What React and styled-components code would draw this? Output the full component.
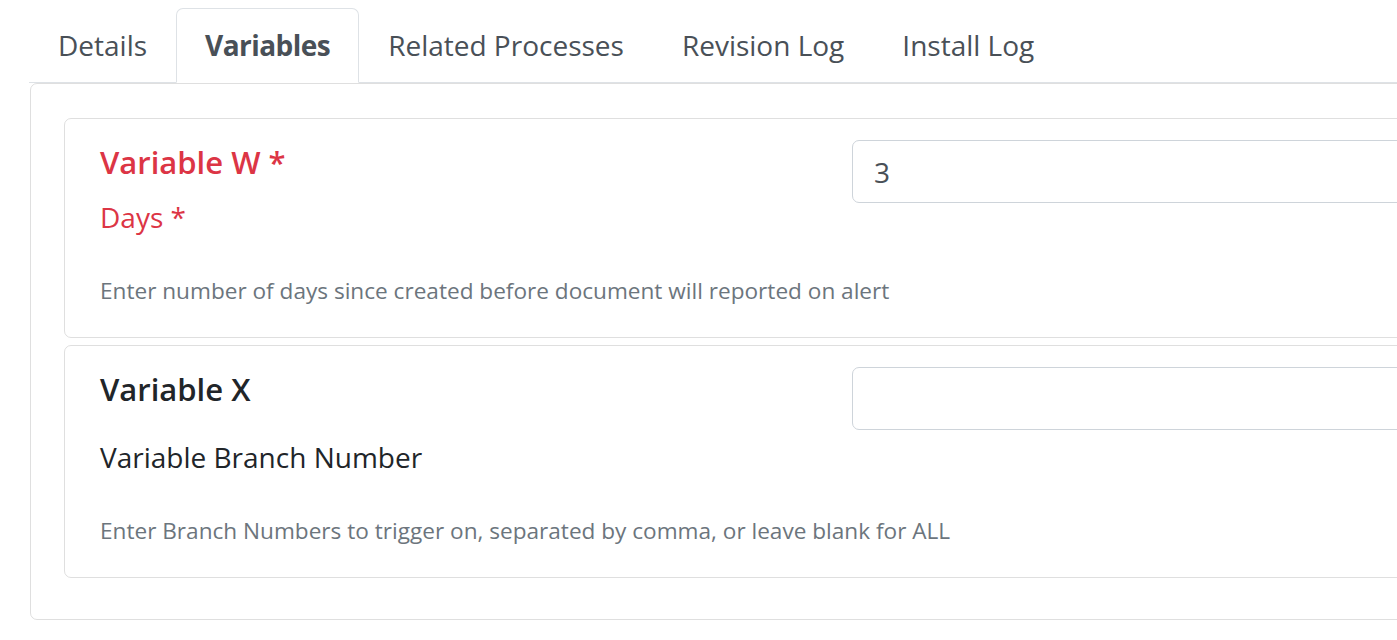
import React from 'react';
import styled, { createGlobalStyle } from 'styled-components';

const Global = createGlobalStyle`
  html, body { margin: 0; padding: 0; background: #fff; overflow: hidden; }
  body { font-family: "Open Sans", "Noto Sans", sans-serif; color: #212529; }
  * { box-sizing: border-box; }
`;

const Page = styled.div`
  width: 1700px;
  padding: 8px 0 0 30px;
`;

const Nav = styled.ul`
  display: flex;
  list-style: none;
  margin: 0 0 0 -1px;
  padding: 0;
  border-bottom: 1px solid #dee2e6;
`;

const Tab = styled.li`
  margin-bottom: -1px;
  padding: 14px 28px;
  font-size: 28px;
  line-height: 45px;
  color: #495057;
  font-weight: ${p => (p.$active ? 700 : 400)};
  letter-spacing: ${p => (p.$active ? '-0.55px' : '0')};
  background: ${p => (p.$active ? '#fff' : 'transparent')};
  border: 1px solid transparent;
  border-color: ${p => (p.$active ? '#dee2e6 #dee2e6 #fff' : 'transparent')};
  border-top-left-radius: 7px;
  border-top-right-radius: 7px;
  white-space: nowrap;
`;

const Card = styled.div`
  border: 1px solid rgba(0, 0, 0, 0.125);
  border-radius: 7px;
  padding: 34px 34px 34px 33px;
`;

const Item = styled.div`
  display: grid;
  grid-template-columns: 752px 1fr;
  align-items: start;
  border: 1px solid rgba(0, 0, 0, 0.125);
  border-radius: 7px;
  padding: 21px 0 30px 35px;
  margin-bottom: 7px;
`;

const Info = styled.div`
  display: flex;
  flex-direction: column;
`;

const Title = styled.h5`
  margin: 0;
  font-size: 31px;
  line-height: 42px;
  font-weight: 600;
  padding-top: 1px;
  margin-bottom: -1px;
  color: ${p => (p.$required ? '#dc3545' : '#212529')};
`;

const Label = styled.label`
  display: block;
  margin-top: ${p => p.$gap}px;
  font-size: 28px;
  line-height: 42px;
  color: ${p => (p.$required ? '#dc3545' : '#212529')};
`;

const Help = styled.small`
  display: block;
  margin-top: 36px;
  font-size: 22.6px;
  line-height: 33px;
  color: #6c757d;
  white-space: nowrap;
`;

const Input = styled.input`
  display: block;
  width: 100%;
  height: 63px;
  padding: 0 21px;
  font-family: inherit;
  font-size: 28px;
  color: #495057;
  background: #fff;
  border: 1px solid #ced4da;
  border-radius: 7px;
  outline: none;
`;

const tabs = ['Details', 'Variables', 'Related Processes', 'Revision Log', 'Install Log'];

const variables = [
  {
    name: 'Variable W',
    label: 'Days',
    required: true,
    gap: 14,
    value: '3',
    help: 'Enter number of days since created before document will reported on alert',
  },
  {
    name: 'Variable X',
    label: 'Variable Branch Number',
    required: false,
    gap: 27,
    value: '',
    help: 'Enter Branch Numbers to trigger on, separated by comma, or leave blank for ALL',
  },
];

export default function App() {
  return (
    <>
      <Global />
      <Page>
        <Nav>
          {tabs.map(t => (
            <Tab key={t} $active={t === 'Variables'}>{t}</Tab>
          ))}
        </Nav>
        <Card>
          {variables.map(v => (
            <Item key={v.name}>
              <Info>
                <Title $required={v.required}>
                  {v.name}{v.required ? ' *' : ''}
                </Title>
                <Label $required={v.required} $gap={v.gap}>
                  {v.label}{v.required ? ' *' : ''}
                </Label>
                <Help>{v.help}</Help>
              </Info>
              <Input defaultValue={v.value} readOnly />
            </Item>
          ))}
        </Card>
      </Page>
    </>
  );
}
